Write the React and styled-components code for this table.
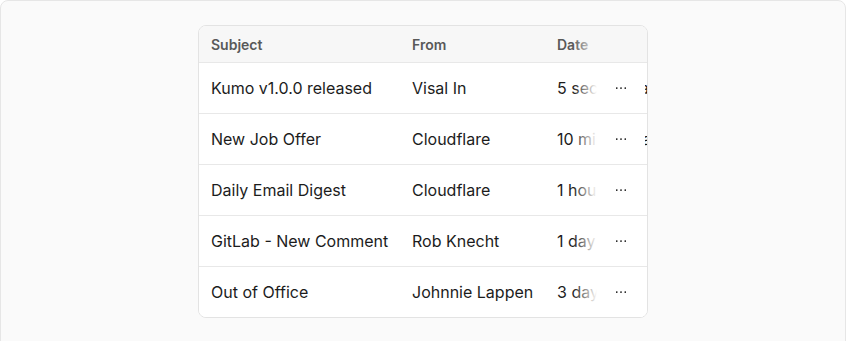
import React from "react";
import styled, { createGlobalStyle } from "styled-components";

const Global = createGlobalStyle`
  html, body { margin: 0; padding: 0; background: #ffffff; }
  body { font-family: Inter, "Noto Sans", sans-serif; -webkit-font-smoothing: antialiased; }
`;

const Frame = styled.div`
  box-sizing: border-box;
  width: 846px;
  height: 360px;
  border: 1px solid #e6e6e6;
  border-radius: 8px;
  background: #fafafa;
  padding-top: 24px;
  display: flex;
  justify-content: center;
  align-items: flex-start;
`;

const Card = styled.div`
  box-sizing: border-box;
  width: 450px;
  border: 1px solid #e3e3e3;
  border-radius: 8px;
  background: #ffffff;
  overflow: hidden;
`;

const Row = styled.div`
  display: grid;
  grid-template-columns: 201px 145px 52px 48px 2px;
  align-items: center;
  height: ${(p) => (p.$header ? "36px" : "50px")};
  background: ${(p) => (p.$header ? "#f7f7f7" : "#ffffff")};
  border-top: ${(p) => (p.$first ? "none" : "1px solid #e8e8e8")};
  --row-bg: ${(p) => (p.$header ? "#f7f7f7" : "#ffffff")};
`;

const Cell = styled.div`
  padding: 0 12px;
  white-space: nowrap;
  font-size: ${(p) => (p.$header ? "14px" : "16px")};
  font-weight: ${(p) => (p.$header ? 600 : 400)};
  color: ${(p) => (p.$header ? "#595959" : "#1c1c1c")};
  overflow: ${(p) => (p.$spill ? "visible" : "hidden")};
`;

const Actions = styled.div`
  position: relative;
  z-index: 1;
  align-self: stretch;
  display: flex;
  align-items: center;
  justify-content: center;
  background: var(--row-bg);
  &::before {
    content: "";
    position: absolute;
    top: 0;
    bottom: 0;
    left: -24px;
    width: 24px;
    background: linear-gradient(to right, rgba(255, 255, 255, 0), var(--row-bg));
  }
`;

const MenuButton = styled.button`
  width: 28px;
  height: 28px;
  border: none;
  background: transparent;
  padding: 0;
  display: flex;
  align-items: center;
  justify-content: center;
  color: #111111;
  border-radius: 6px;
  cursor: pointer;
`;

const Dots = () => (
  <svg width="16" height="16" viewBox="0 0 256 256" fill="currentColor" aria-hidden="true">
    <circle cx="60" cy="128" r="14" />
    <circle cx="128" cy="128" r="14" />
    <circle cx="196" cy="128" r="14" />
  </svg>
);

const rows = [
  { subject: "Kumo v1.0.0 released", from: "Visal In", date: "5 seconds ago" },
  { subject: "New Job Offer", from: "Cloudflare", date: "10 minutes ago" },
  { subject: "Daily Email Digest", from: "Cloudflare", date: "1 hour ago" },
  { subject: "GitLab - New Comment", from: "Rob Knecht", date: "1 day ago" },
  { subject: "Out of Office", from: "Johnnie Lappen", date: "3 days ago" },
];

export default function App() {
  return (
    <>
      <Global />
      <Frame>
        <Card>
          <Row $header $first>
            <Cell $header>Subject</Cell>
            <Cell $header>From</Cell>
            <Cell $header $spill>Date</Cell>
            <Actions />
            <div />
          </Row>
          {rows.map((r) => (
            <Row key={r.subject}>
              <Cell>{r.subject}</Cell>
              <Cell>{r.from}</Cell>
              <Cell $spill>{r.date}</Cell>
              <Actions>
                <MenuButton aria-label="More">
                  <Dots />
                </MenuButton>
              </Actions>
              <div />
            </Row>
          ))}
        </Card>
      </Frame>
    </>
  );
}
